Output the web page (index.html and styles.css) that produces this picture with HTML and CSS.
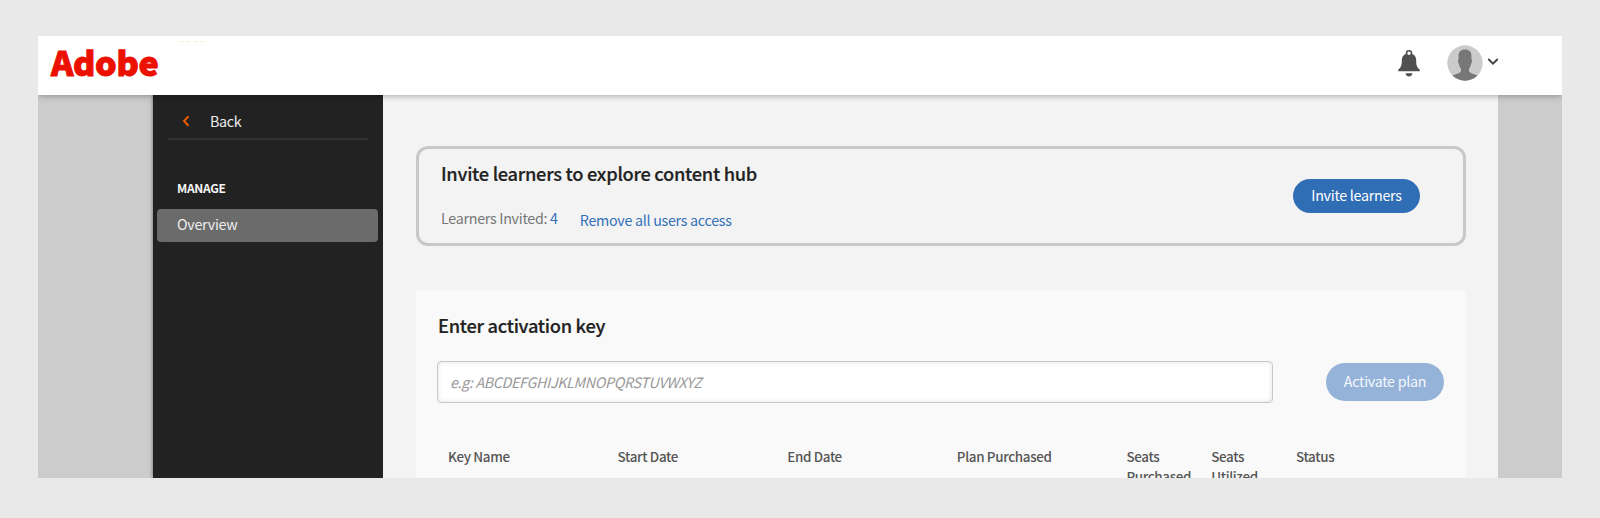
FILE: index.html
```html
<!DOCTYPE html>
<html lang="en">
<head>
<meta charset="utf-8">
<title>Adobe Content Hub</title>
<link rel="stylesheet" href="styles.css">
</head>
<body>
<div class="app">
  <header class="topbar">
    <div class="brandbox"><span class="brand">Adobe</span><span class="trace"></span></div>
    <div class="tools">
      <svg class="bell" width="22" height="27" viewBox="0 0 22 27"><path fill="#505050" fill-rule="evenodd" d="M11 0a3.300 3.300 0 0 1 3.300 3.300v.7c2.700 1.100 3.900 3.400 3.900 6.500 0 5 .8 6.800 3.500 9.100v1.600H.3v-1.600C3 17.300 3.800 15.500 3.800 10.500c0-3.100 1.200-5.400 3.900-6.500v-.7A3.300 3.300 0 0 1 11 0Zm0 1.500a1.700 1.700 0 1 0 0 3.400 1.700 1.700 0 0 0 0-3.400Z"/><path fill="#505050" d="M7.500 23.300h7c-.4 2-1.600 3.300-3.500 3.300s-3.100-1.300-3.500-3.300Z"/></svg>
      <svg class="avatar" width="36" height="36" viewBox="0 0 36 36"><defs><clipPath id="disc"><circle cx="18" cy="18" r="17.700"/></clipPath></defs><circle cx="18" cy="18" r="17.700" fill="#cbcbcb"/><path clip-path="url(#disc)" fill="#777" d="M18 4.500c4.300 0 6.500 2.300 6.400 6.500v3c.9.300.7 3.800-.3 4.800-.5 2.400-1.200 4-2.100 5.200v2.200c1.200 2.300 5.600 2.700 9.500 4.800V36H4.500v-5c3.900-2.100 8.300-2.500 9.500-4.800V24c-.9-1.200-1.600-2.800-2.100-5.200-1-1-1.200-4.500-.3-4.800v-3c-.1-4.200 2.100-6.500 6.400-6.500Z"/></svg>
      <svg class="caret" width="12" height="8" viewBox="0 0 12 8"><path d="M1.800 1.500 6 5.700l4.200-4.200" fill="none" stroke="#444" stroke-width="1.900" stroke-linecap="round"/></svg>
    </div>
  </header>
  <div class="body">
    <nav class="sidebar">
      <a class="back"><svg width="8" height="12" viewBox="0 0 8 12"><path d="M6.500 1.300 2 6l4.500 4.700" fill="none" stroke="#e65c00" stroke-width="2"/></svg><span>Back</span></a>
      <h2 class="group">MANAGE</h2>
      <a class="item">Overview</a>
    </nav>
    <main class="content">
      <section class="invite">
        <div>
          <h1 class="title">Invite learners to explore content hub</h1>
          <div class="meta"><span class="count">Learners Invited: <b>4</b></span><a class="remove">Remove all users access</a></div>
        </div>
        <button class="btn">Invite learners</button>
      </section>
      <section class="panel">
        <h1 class="title">Enter activation key</h1>
        <div class="form">
          <input class="key" placeholder="e.g: ABCDEFGHIJKLMNOPQRSTUVWXYZ">
          <button class="btn activate">Activate plan</button>
        </div>
        <div class="columns">
          <span>Key Name</span><span>Start Date</span><span>End Date</span><span>Plan Purchased</span><span>Seats Purchased</span><span>Seats Utilized</span><span>Status</span>
        </div>
      </section>
    </main>
  </div>
</div>
</body>
</html>
```
FILE: styles.css
```css
* { box-sizing: border-box; }
body {
  margin: 0;
  height: 518px;
  padding: 36px 38px 40px;
  background: #e9e9e9;
  font-family: "Noto Sans CJK SC", "Noto Sans", sans-serif;
  font-size: 14.3px;
  letter-spacing: -.29px;
  line-height: 20px;
  overflow: hidden;
}
h1, h2 { margin: 0; }
.app { width: 1524px; height: 442px; overflow: hidden; display: flex; flex-direction: column; background: #ccc; }
.topbar {
  position: relative;
  flex: 0 0 59px;
  display: flex;
  justify-content: space-between;
  padding: 0 64px 0 13px;
  background: #fff;
  box-shadow: 0 0 7px rgba(0, 0, 0, .4);
}
.brandbox { display: flex; align-items: flex-start; gap: 21px; }
.brand { font-weight: 900; font-size: 34px; line-height: 52px; letter-spacing: -.35px; color: #eb1000; -webkit-text-stroke: 1px #eb1000; }
.trace { width: 27px; height: 1px; margin-top: 5px; background: repeating-linear-gradient(90deg, #fdf0dc 0 5px, #fff 5px 7px); }
.tools { display: flex; align-items: flex-start; }
.bell { margin: 14px 27px 0 0; }
.avatar { margin: 9px 4px 0 0; }
.caret { margin: 22px -1px 0 0; }
.body { flex: 1; min-height: 0; display: flex; padding: 0 64px 0 115px; }
.sidebar { flex: 0 0 230px; padding-top: 11px; background: #222; color: #eee; box-shadow: 0 0 4px rgba(0, 0, 0, .5); }
.back { display: flex; align-items: center; gap: 20px; height: 34px; margin: 0 15px; padding: 0 0 2px 14px; border-bottom: 2px solid #333; }
.group { margin: 38px 24px 0; font-size: 12px; line-height: 20px; color: #f5f5f5; }
.item { display: block; height: 33px; margin: 11px 5px 0 4px; padding-left: 20px; border-radius: 4px; background: #6b6b6b; line-height: 30px; }
.content { flex: 1; padding: 51px 32px 0 33px; background: #f3f3f3; }
.invite { display: flex; justify-content: space-between; height: 100px; padding: 11px 43px 0 22px; border: 3px solid #c8c8c8; border-radius: 12px; }
.title { font-size: 18.3px; font-weight: 500; line-height: 26px; color: #222; -webkit-text-stroke: .2px #222; }
.meta { display: flex; gap: 22px; margin-top: 22px; color: #777; }
.count b { font-weight: 400; color: #3470b8; }
.remove { margin-top: 2px; color: #3470b8; }
.btn { width: 127px; height: 34px; margin-top: 19px; padding: 0 0 2px; border: 0; border-radius: 20px; background: #2f6db5; color: #fff; font: inherit; letter-spacing: inherit; }
.panel { height: 240px; margin-top: 44px; padding: 22px 22px 0 22px; background: #f9f9f9; }
.form { display: flex; justify-content: space-between; margin: 23px 0 0 -1px; }
.key { width: 836px; height: 42px; padding: 0 12px 2px; border: 1px solid #c8c8c8; border-radius: 4px; background: #fff; box-shadow: inset 0 0 5px rgba(0, 0, 0, .12); font: inherit; letter-spacing: -.35px; }
.key::placeholder { color: #999; font-style: italic; opacity: 1; }
.activate { width: 118px; height: 38px; margin-top: 2px; background: #95b2d8; color: #f4f8fd; }
.columns { display: grid; grid-template-columns: repeat(4, 169.600px) 84.800px 84.800px 1fr; margin: 44px 0 0 10px; font-size: 13.400px; font-weight: 500; letter-spacing: -.33px; line-height: 19.500px; color: #555; }
.columns span { padding-right: 14px; }
```
